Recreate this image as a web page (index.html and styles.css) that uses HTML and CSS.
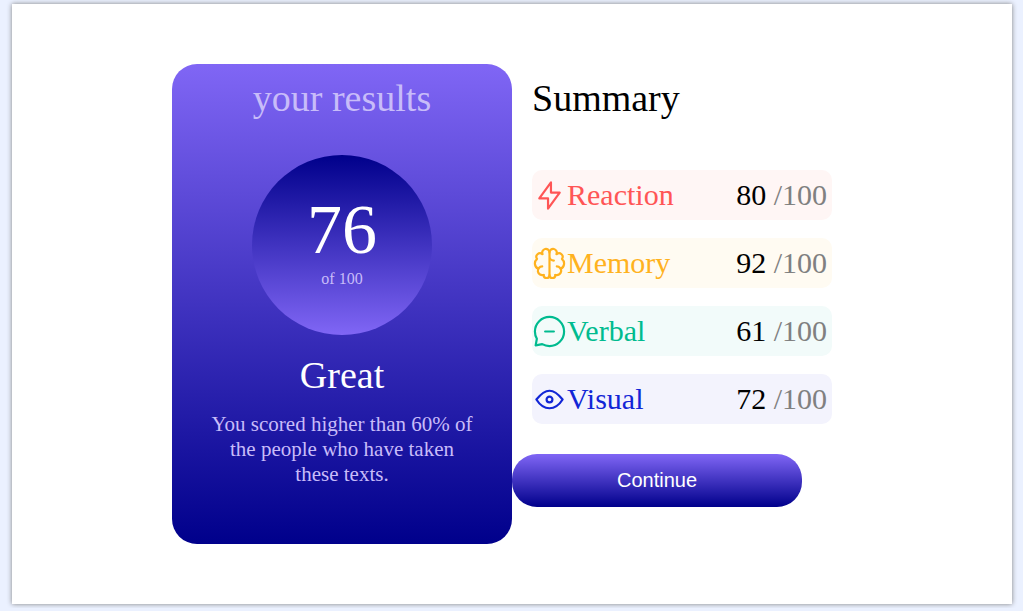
FILE: index.html
```html
<!DOCTYPE html>
<html lang="en">
<head>
<meta charset="utf-8">
<meta name="viewport" content="width=device-width, initial-scale=1">
<title>Results summary</title>
<link rel="stylesheet" href="styles.css">
</head>
<body>
<main class="panel">
  <section class="results">
    <h1 class="results-title">your results</h1>
    <div class="score">
      <span class="score-value">76</span>
      <span class="score-total">of 100</span>
    </div>
    <h2 class="results-grade">Great</h2>
    <p class="results-text">You scored higher than 60% of the people who have taken these texts.</p>
  </section>
  <section class="summary">
    <h2 class="summary-title">Summary</h2>
    <ul class="list">
      <li class="item reaction">
        <svg class="icon" viewBox="0 0 20 20" aria-hidden="true"><path d="M10.833 8.333V2.5l-6.666 9.167h5V17.5l6.666-9.167h-5Z"/></svg>
        <span class="name">Reaction</span>
        <span class="points">80 <span class="max">/100</span></span>
      </li>
      <li class="item memory">
        <svg class="icon" viewBox="0 0 20 20" aria-hidden="true"><path d="M5.833 11.667a2.5 2.5 0 1 0 .834 4.858"/><path d="M3.553 13.004a3.333 3.333 0 0 1-.728-5.53m.025-.067a2.083 2.083 0 0 1 2.983-2.824m.199.054A2.083 2.083 0 1 1 10 3.75v12.917a1.667 1.667 0 0 1-3.333 0M10 5.833a2.5 2.5 0 0 0 2.5 2.5m1.667 3.334a2.5 2.5 0 1 1-.834 4.858"/><path d="M16.447 13.004a3.334 3.334 0 0 0 .728-5.53m-.025-.067a2.083 2.083 0 0 0-2.983-2.824M10 3.75a2.085 2.085 0 0 1 2.538-2.033 2.084 2.084 0 0 1 1.43 2.92m-.635 12.03a1.667 1.667 0 0 1-3.333 0"/></svg>
        <span class="name">Memory</span>
        <span class="points">92 <span class="max">/100</span></span>
      </li>
      <li class="item verbal">
        <svg class="icon" viewBox="0 0 20 20" aria-hidden="true"><path d="M7.5 10h5M10 18.333A8.333 8.333 0 1 0 1.667 10c0 1.518.406 2.942 1.115 4.167l-.699 3.75 3.75-.699A8.295 8.295 0 0 0 10 18.333Z"/></svg>
        <span class="name">Verbal</span>
        <span class="points">61 <span class="max">/100</span></span>
      </li>
      <li class="item visual">
        <svg class="icon" viewBox="0 0 20 20" aria-hidden="true"><path d="M10 11.667a1.667 1.667 0 1 0 0-3.334 1.667 1.667 0 0 0 0 3.334Z"/><path d="M17.5 10c-1.574 2.492-4.402 5-7.5 5s-5.926-2.508-7.5-5C4.416 7.632 6.66 5 10 5s5.584 2.632 7.5 5Z"/></svg>
        <span class="name">Visual</span>
        <span class="points">72 <span class="max">/100</span></span>
      </li>
    </ul>
    <button class="continue" type="button">Continue</button>
  </section>
</main>
</body>
</html>
```
FILE: styles.css
```css
* {
  box-sizing: border-box;
}

body {
  margin: 0;
  padding: 4px 8px 4px 9px;
  background: #ebf1ff;
  font-family: "Liberation Serif", "Times New Roman", serif;
}

h1,
h2,
p,
ul {
  margin: 0;
  padding: 0;
  font-weight: 400;
}

.panel {
  display: flex;
  justify-content: center;
  max-width: 1000px;
  margin: 0 auto;
  padding: 60px 20px;
  background: #fff;
  box-shadow: 0 0 5px gray;
}

.results {
  display: flex;
  flex-direction: column;
  align-items: center;
  flex: 0 1 340px;
  padding: 12px 35px 57px;
  border-radius: 25px;
  background: linear-gradient(#8066f5, #00008b);
  color: #fff;
  text-align: center;
}

.results-title,
.results-grade,
.summary-title {
  font-size: 38px;
  line-height: 44px;
}

.results-title,
.results-text,
.score-total {
  color: #c8bcf9;
}

.score {
  display: flex;
  flex-direction: column;
  align-items: center;
  width: 180px;
  height: 180px;
  margin: 35px 0 18px;
  padding-top: 35px;
  border-radius: 50%;
  background: linear-gradient(#00008b, #8066f5);
}

.score-value {
  font-size: 70px;
  line-height: 80px;
}

.score-total {
  font-size: 16px;
  line-height: 18px;
}

.results-text {
  margin-top: 15px;
  font-size: 21px;
  line-height: 25px;
}

.summary {
  flex: 0 1 340px;
  padding-top: 12px;
}

.summary-title {
  margin: 0 20px 50px;
}

.list {
  display: grid;
  gap: 18px;
  margin: 0 20px 30px;
  list-style: none;
}

.item {
  display: flex;
  align-items: center;
  height: 50px;
  padding-right: 5px;
  border-radius: 10px;
  font-size: 30px;
}

.icon {
  width: 35px;
  height: 35px;
  fill: none;
  stroke: currentColor;
  stroke-width: 1.25;
  stroke-linecap: round;
  stroke-linejoin: round;
}

.points {
  margin-left: auto;
  color: #000;
}

.max {
  color: gray;
}

.reaction {
  background: #fff6f5;
  color: #ff5555;
}

.memory {
  background: #fffbf2;
  color: #ffb21e;
}

.verbal {
  background: #f2fbfa;
  color: #00bb8f;
}

.visual {
  background: #f3f3fd;
  color: #1125d6;
}

.continue {
  width: 290px;
  height: 53px;
  border: 0;
  border-radius: 25px;
  background: linear-gradient(#8066f5, #00008b);
  color: #fff;
  font-family: "Liberation Sans", Arial, sans-serif;
  font-size: 20px;
}
```
